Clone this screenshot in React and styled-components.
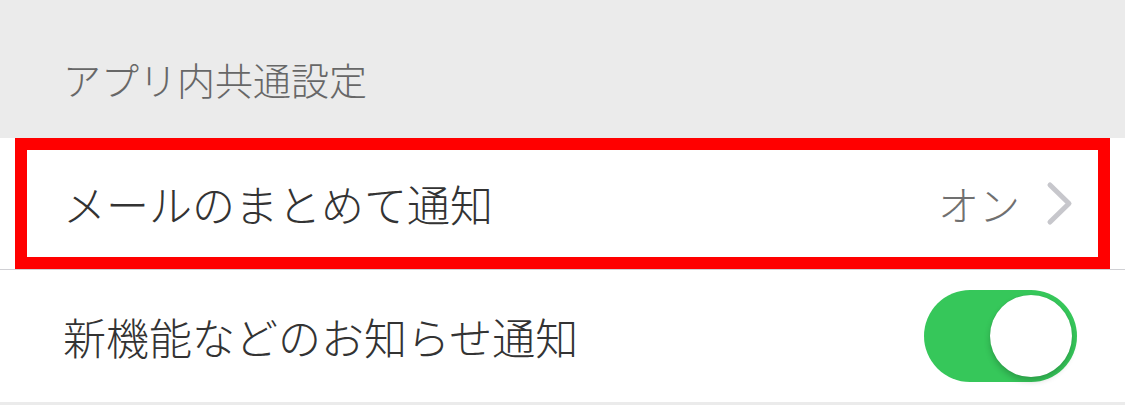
import React from "react";
import styled, { createGlobalStyle } from "styled-components";

const GlobalStyle = createGlobalStyle`
	body {
		margin: 0;
		background: #fff;
		font-family: "Noto Sans CJK JP", "Noto Sans", sans-serif;
	}
`;

const Page = styled.div`
	width: 1125px;
	background: #ebebeb;
	padding-bottom: 3px;
`;

const SectionHeader = styled.div`
	box-sizing: border-box;
	height: 138px;
	padding: 60px 0 0 63px;
	font-size: 38px;
	font-weight: 300;
	line-height: 38px;
	color: #676767;
`;

const List = styled.div`
	background: #fff;
`;

const Row = styled.div`
	position: relative;
	box-sizing: border-box;
	display: flex;
	align-items: center;
	height: 132px;
	padding: 0 ${({ padRight }) => padRight}px 0 63px;
	border-bottom: ${({ last }) => (last ? "none" : "1px solid #d0d0d4")};
`;

const Label = styled.span`
	flex: 1;
	font-size: 43px;
	font-weight: 300;
	line-height: 43px;
	color: #333;
`;

const Value = styled.span`
	font-size: 41px;
	font-weight: 300;
	line-height: 43px;
	color: #707070;
	margin-right: 26px;
`;

const Highlight = styled.div`
	position: absolute;
	top: 0;
	bottom: 0;
	left: 15px;
	right: 15px;
	border: 12px solid #ff0000;
	pointer-events: none;
`;

const Switch = styled.div`
	position: relative;
	width: 153px;
	height: 92px;
	border-radius: 46px;
	background: ${({ on }) => (on ? "#36c75a" : "#e5e5ea")};
`;

const Knob = styled.div`
	position: absolute;
	top: 5px;
	right: 5px;
	width: 82px;
	height: 82px;
	border-radius: 50%;
	background: #fff;
	box-shadow: 0 4px 6px rgba(0, 0, 0, 0.2), 0 0 1px rgba(0, 0, 0, 0.15);
`;

const Chevron = () => (
	<svg width="27" height="45" viewBox="0 0 27 45">
		<path
			d="M4 4 L23 22.5 L4 41"
			fill="none"
			stroke="#c7c7cc"
			strokeWidth="5"
			strokeLinecap="round"
			strokeLinejoin="round"
		/>
	</svg>
);

export default function App() {
	return (
		<Page>
			<GlobalStyle />
			<SectionHeader>アプリ内共通設定</SectionHeader>
			<List>
				<Row padRight={52}>
					<Label>メールのまとめて通知</Label>
					<Value>オン</Value>
					<Chevron />
					<Highlight />
				</Row>
				<Row last padRight={48}>
					<Label>新機能などのお知らせ通知</Label>
					<Switch on>
						<Knob />
					</Switch>
				</Row>
			</List>
		</Page>
	);
}
